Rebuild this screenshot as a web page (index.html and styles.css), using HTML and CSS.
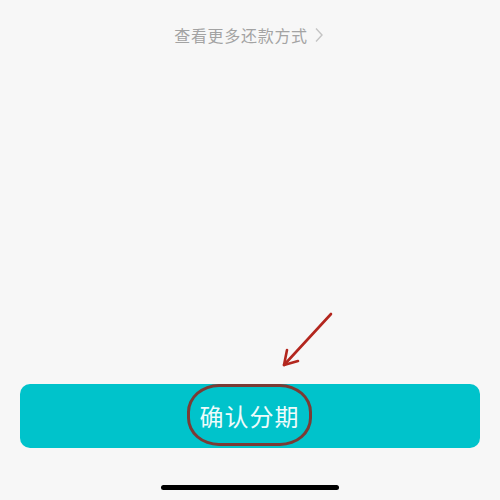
FILE: index.html
```html
<!DOCTYPE html>
<html lang="zh">
<head>
<meta charset="utf-8">
<link rel="stylesheet" href="styles.css">
</head>
<body>
<div class="page">
  <div class="more">
    <span class="more-text">查看更多还款方式</span>
    <svg class="chev" width="10" height="16" viewBox="0 0 10 16"><path d="M2 1.5 L8 8 L2 14.5" fill="none" stroke="#c4c4c4" stroke-width="1.4"/></svg>
  </div>
  <div class="spacer"></div>
  <div class="btn-wrap">
    <svg class="arrow" width="60" height="60" viewBox="0 0 60 60">
      <path d="M49 2 L2 53" stroke="#b3261e" stroke-width="2.6" fill="none" stroke-linecap="round"/>
      <path d="M5 38 L2 53 L16 49" stroke="#b3261e" stroke-width="2.6" fill="none" stroke-linecap="round" stroke-linejoin="round"/>
    </svg>
    <button class="confirm">
      <span class="oval">确认分期</span>
    </button>
  </div>
  <div class="home-bar"></div>
</div>
</body>
</html>
```
FILE: styles.css
```css
html, body {
  margin: 0;
  padding: 0;
  background: #f7f7f7;
}
.page {
  width: 500px;
  height: 500px;
  display: flex;
  flex-direction: column;
  align-items: center;
  font-family: "Noto Sans CJK SC", "Noto Sans", sans-serif;
}
.more {
  margin-top: 23px;
  display: flex;
  align-items: center;
  gap: 6px;
  padding-right: 2px;
}
.more-text {
  font-size: 16px;
  color: #a3a3a3;
  letter-spacing: 0.7px;
  line-height: 24px;
}
.chev {
  display: block;
}
.spacer {
  flex: 1;
}
.btn-wrap {
  position: relative;
  width: 460px;
}
.arrow {
  position: absolute;
  left: 262px;
  top: -72px;
}
.confirm {
  width: 460px;
  height: 64px;
  border: none;
  border-radius: 10px;
  background: #00c3cb;
  display: flex;
  align-items: flex-start;
  justify-content: center;
  padding: 0;
  font-family: inherit;
}
.oval {
  display: block;
  width: 119px;
  height: 56px;
  margin-left: -1px;
  border: 3px solid #7b3b35;
  border-radius: 32px / 28px;
  color: #eefbfb;
  font-size: 24px;
  line-height: 58px;
  letter-spacing: 1px;
  text-align: center;
}
.home-bar {
  margin-top: 37px;
  margin-bottom: 10px;
  width: 178px;
  height: 5px;
  border-radius: 3px;
  background: #000;
}
```
